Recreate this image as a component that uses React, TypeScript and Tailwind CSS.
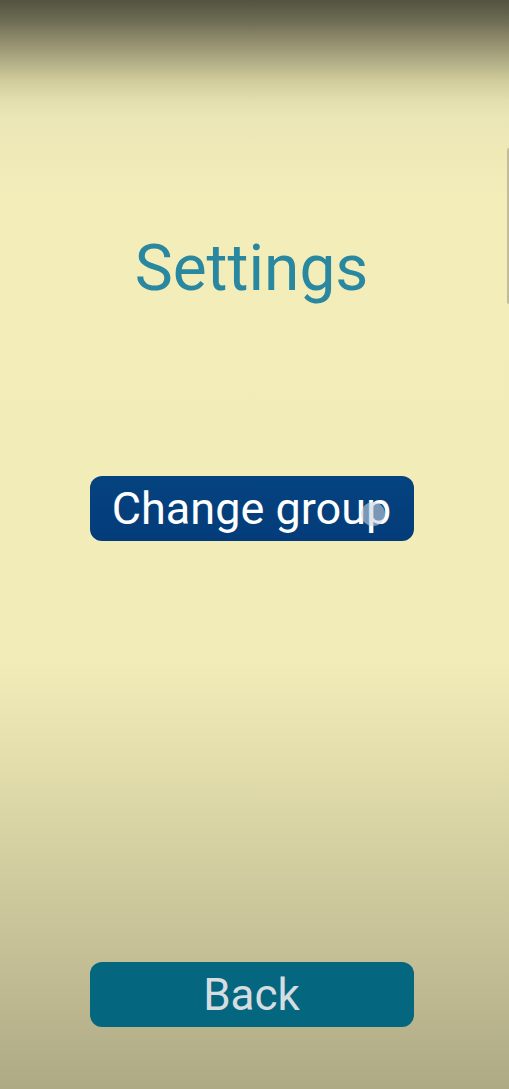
import React from 'react';

const font = { fontFamily: 'Roboto, "Noto Sans", sans-serif' };

export default function App() {
  return (
    <div
      className="relative flex h-[1089px] w-full flex-col items-center overflow-hidden pr-[6px] bg-[linear-gradient(to_bottom,#535341_0px,#6b6a53_20px,#8f8b6c_40px,#aeab85_60px,#d0cb9a_80px,#e3deae_100px,#ebe6b5_117px,#f2edb9_200px,#f1ecb8_660px,#e0dba9_780px,#cdc89c_900px,#bdb890_1000px,#aeaa84_1089px)]"
      style={font}
    >
      <h1 className="mt-[237px] text-[64px] leading-[64px] font-normal text-[#2a87a0]">Settings</h1>

      <button className="relative mt-[175px] flex h-[65px] w-[324px] items-center justify-center rounded-[12px] bg-[linear-gradient(to_bottom,#04437f,#043c7a)] text-[45px] leading-none text-white">
        Change group
        <span className="absolute left-[271px] top-[26px] h-[24px] w-[24px] rounded-full bg-[#c8d4e0]/60" />
      </button>

      <button className="mt-auto mb-[62px] flex h-[65px] w-[324px] items-center justify-center rounded-[12px] bg-[#05667f] text-[44px] leading-none text-[#d5dde0]">
        Back
      </button>

      {/* scroll edge */}
      <div className="absolute right-0 top-[148px] h-[156px] w-[2px] rounded-l bg-[#c2bd98]" />
    </div>
  );
}
